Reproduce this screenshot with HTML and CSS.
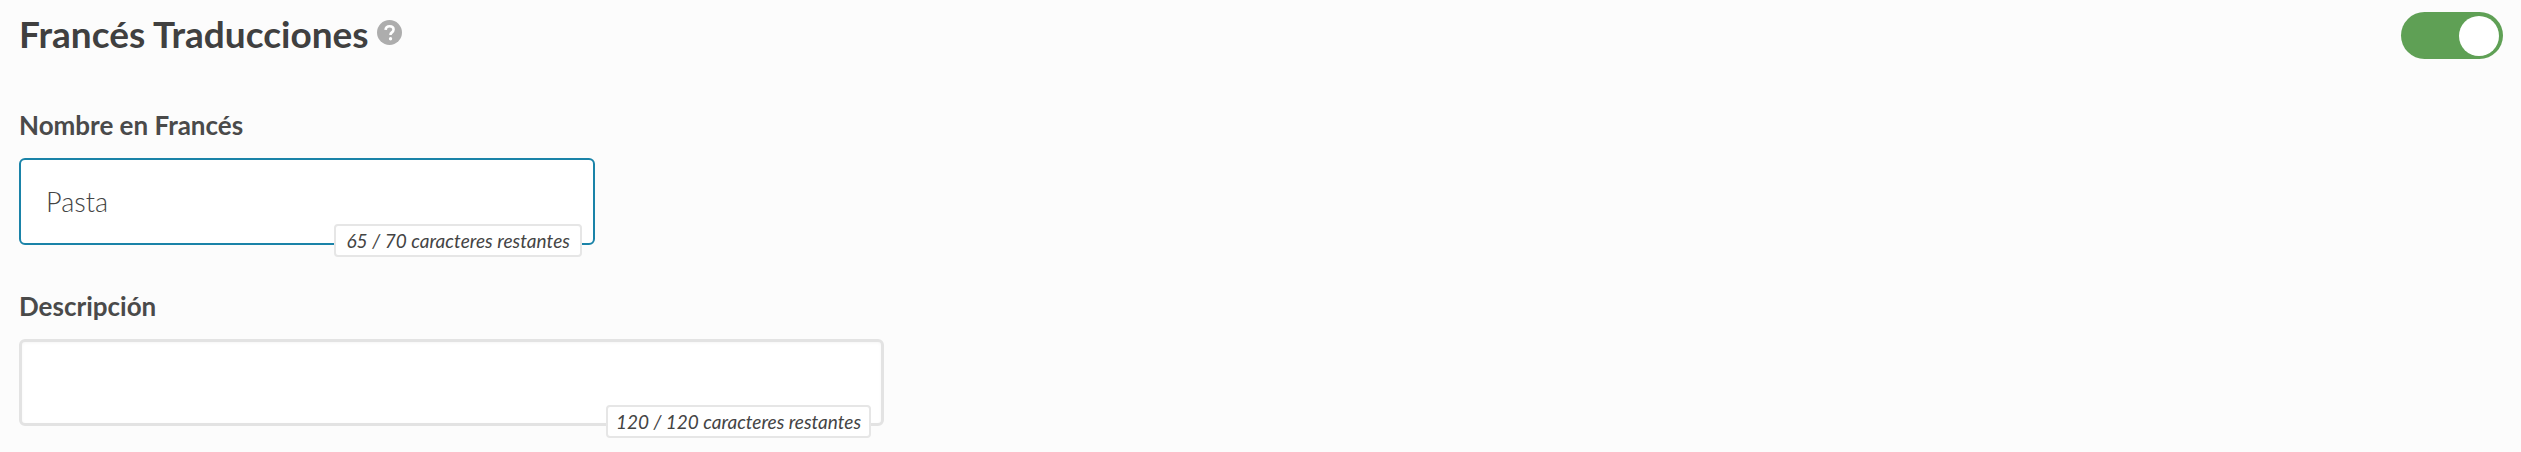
FILE: index.html
```html
<!DOCTYPE html>
<html lang="es">
<head>
<meta charset="utf-8">
<title>Francés Traducciones</title>
<link rel="stylesheet" href="styles.css">
</head>
<body>
<main class="panel">
  <header class="head">
    <div class="title-wrap">
      <h2 class="title">Francés Traducciones</h2>
      <svg class="help" viewBox="0 0 24 24" aria-hidden="true">
        <circle cx="12" cy="12" r="12" fill="#adadad"/>
        <path d="M8.2 9.4c.2-2.200 1.800-3.400 3.900-3.400 2.200 0 3.800 1.200 3.800 3.200 0 1.500-.9 2.200-1.800 2.900-.8.600-1.100 1-1.100 1.900v.4" fill="none" stroke="#fff" stroke-width="2.500"/>
        <circle cx="13" cy="18" r="1.600" fill="#fff"/>
      </svg>
    </div>
    <span class="toggle"><span class="knob"></span></span>
  </header>
  <section class="field field-name">
    <label class="label">Nombre en Francés</label>
    <div class="box box-active">
      <span class="value">Pasta</span>
      <span class="counter">65 / 70 caracteres restantes</span>
    </div>
  </section>
  <section class="field field-desc">
    <label class="label">Descripción</label>
    <div class="box box-wide">
      <span class="counter">120 / 120 caracteres restantes</span>
    </div>
  </section>
</main>
</body>
</html>
```
FILE: styles.css
```css
* { box-sizing: border-box; }
html, body { margin: 0; height: 100%; }
body {
  background: #fcfcfc;
  color: #444;
  font-family: Lato, "Open Sans", sans-serif;
  overflow: hidden;
}
.panel { padding: 12px 18px 0 19px; }
.head {
  display: flex;
  justify-content: space-between;
  align-items: flex-start;
  height: 47px;
}
.title-wrap { display: flex; align-items: flex-start; gap: 8px; height: 47px; }
.title {
  margin: 0;
  font-size: 37px;
  line-height: 43px;
  font-weight: 700;
  color: #404040;
}
.help { width: 25px; height: 25px; margin-top: 8px; }
.toggle {
  display: flex;
  justify-content: flex-end;
  align-items: center;
  width: 102px;
  height: 47px;
  padding-right: 4px;
  border-radius: 24px;
  background: #5fa055;
}
.knob { width: 40px; height: 40px; border-radius: 50%; background: #fff; }
.field { display: flex; flex-direction: column; }
.field-name { margin-top: 50px; }
.field-desc { margin-top: 45px; }
.label {
  font-size: 26px;
  line-height: 32px;
  font-weight: 700;
  color: #4a4a4a;
  margin-bottom: 17px;
}
.box {
  position: relative;
  width: 576px;
  height: 87px;
  display: flex;
  align-items: center;
  padding: 0 25px;
  background: #fff;
  border: 2px solid #e3e3e3;
  border-radius: 6px;
}
.box-active { border-color: #1a83a8; }
.box-wide { width: 865px; border-width: 3px; box-shadow: inset 0 1px 3px rgba(0, 0, 0, .04); }
.value { font-size: 27px; font-weight: 300; color: #444; }
.counter {
  position: absolute;
  right: 11px;
  bottom: -14px;
  height: 33px;
  display: flex;
  align-items: center;
  padding: 0 10px;
  background: #fff;
  border: 2px solid #e6e6e6;
  border-radius: 4px;
  font-size: 19px;
  letter-spacing: .05px;
  font-style: italic;
  white-space: nowrap;
  color: #444;
}
.box-wide .counter { right: 10px; bottom: -15px; padding: 0 8px; letter-spacing: 0; }
```
